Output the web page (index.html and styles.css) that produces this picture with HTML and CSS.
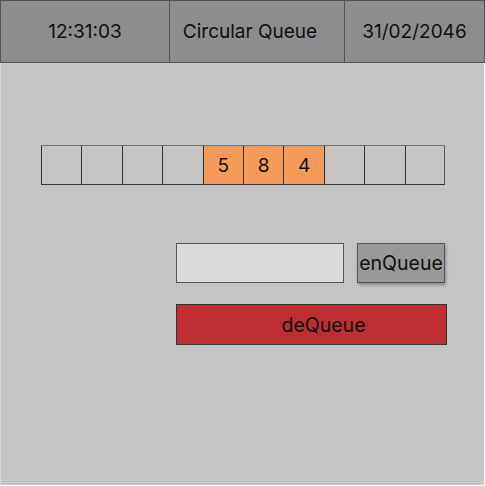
FILE: index.html
```html
<!DOCTYPE html>
<html>
<head>
<meta charset="utf-8">
<link rel="stylesheet" href="styles.css">
</head>
<body>
<div class="app">
  <header class="topbar">
    <div class="cell">12:31:03</div>
    <div class="cell title">Circular Queue</div>
    <div class="cell">31/02/2046</div>
  </header>
  <div class="queue">
    <div class="slot"></div>
    <div class="slot"></div>
    <div class="slot"></div>
    <div class="slot"></div>
    <div class="slot filled">5</div>
    <div class="slot filled">8</div>
    <div class="slot filled">4</div>
    <div class="slot"></div>
    <div class="slot"></div>
    <div class="slot last"></div>
  </div>
  <div class="controls">
    <div class="row">
      <input class="field" type="text">
      <button class="enq">enQueue</button>
    </div>
    <button class="deq">deQueue</button>
  </div>
</div>
</body>
</html>
```
FILE: styles.css
```css
html, body {
  margin: 0;
  padding: 0;
  background: #ffffff;
}
body {
  font-family: Inter, "Noto Sans", sans-serif;
  color: #111;
}
.app {
  width: 484px;
  height: 485px;
  background: #c4c4c4;
  display: flex;
  flex-direction: column;
  box-sizing: border-box;
  border-left: 1px solid #d4d4d4;
}
.topbar {
  display: grid;
  grid-template-columns: 169px 175px 1fr;
  height: 63px;
  margin-left: -1px;
  width: 485px;
}
.cell {
  background: #8d8d8d;
  border: 1px solid #555;
  border-right: none;
  display: flex;
  align-items: center;
  justify-content: center;
  font-size: 19px;
  box-sizing: border-box;
}
.cell.title {
  padding-right: 14px;
}
.cell:last-child {
  border-right: 1px solid #555;
}
.queue {
  margin-top: 82px;
  margin-left: 40px;
  display: grid;
  grid-template-columns: repeat(10, 40.4px);
  height: 40px;
}
.slot {
  box-sizing: border-box;
  border-left: 1.5px solid #333;
  border-bottom: 1.5px solid #333;
  border-top: 1.5px solid #777;
  display: flex;
  align-items: center;
  justify-content: center;
  font-size: 19px;
}
.slot.last {
  border-right: 1.5px solid #555;
}
.slot.filled {
  background: #f59b5a;
}
.controls {
  margin-top: 58px;
  margin-left: 175px;
  display: flex;
  flex-direction: column;
  gap: 21px;
}
.row {
  display: flex;
  gap: 13px;
  height: 40px;
}
.field {
  width: 168px;
  height: 40px;
  box-sizing: border-box;
  background: #d9d9d9;
  border: 1px solid #555;
  margin: 0;
  padding: 0;
}
.enq {
  width: 88px;
  height: 40px;
  box-sizing: border-box;
  background: #999;
  border: 1px solid #555;
  margin: 0;
  padding: 0;
  font-family: Inter, "Noto Sans", sans-serif;
  font-size: 19.5px;
  color: #111;
  box-shadow: 1px 2px 3px rgba(0,0,0,0.3);
}
.deq {
  width: 271px;
  height: 41px;
  box-sizing: border-box;
  background: #bc2e32;
  border: 1px solid #333;
  margin: 0;
  padding: 0 0 0 24px;
  font-family: Inter, "Noto Sans", sans-serif;
  font-size: 19.5px;
  color: #111;
}
```
